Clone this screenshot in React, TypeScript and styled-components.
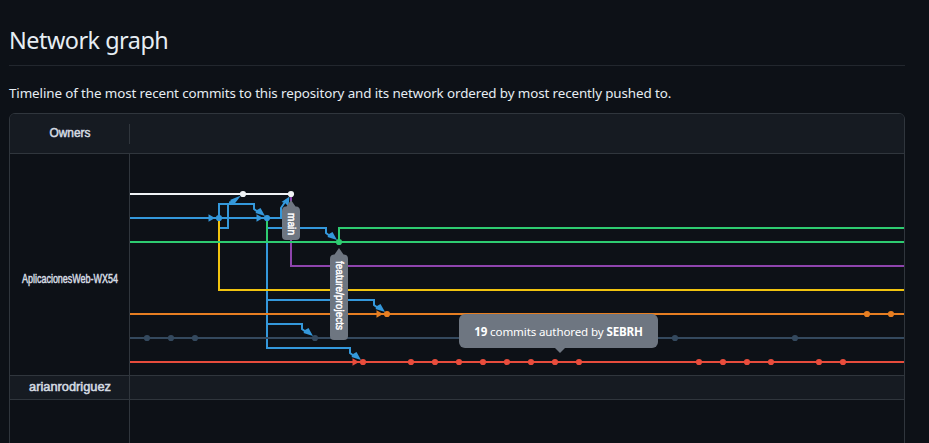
import React from "react";
import styled, { createGlobalStyle } from "styled-components";

const GlobalStyle = createGlobalStyle`
  * { box-sizing: border-box; }
  html, body { margin: 0; height: 443px; overflow: hidden; background: #0d1117; }
`;

const Page = styled.main`
  width: 929px;
  height: 443px;
  overflow: hidden;
  padding: 22px 24px 0 9px;
  background: #0d1117;
  color: #e6edf3;
  font-family: "Noto Sans", "Open Sans", sans-serif;
`;

const Title = styled.h1`
  margin: 0;
  height: 44px;
  border-bottom: 1px solid #22272e;
  font-size: 23.4px;
  font-weight: 400;
  line-height: 37px;
  letter-spacing: -0.5px;
`;

const Intro = styled.p`
  margin: 17px 0 9px;
  height: 21px;
  font-size: 13.4px;
  line-height: 20px;
  letter-spacing: -0.11px;
  white-space: nowrap;
`;

const Panel = styled.section`
  height: 360px;
  border: 1px solid #30363d;
  border-radius: 6px 6px 0 0;
  overflow: hidden;
`;

const Row = styled.div<{ $height: number; $shaded?: boolean; $last?: boolean }>`
  display: grid;
  grid-template-columns: 120px 1fr;
  height: ${(p) => p.$height}px;
  background: ${(p) => (p.$shaded ? "#161b22" : "#0d1117")};
  border-bottom: ${(p) => (p.$last ? "none" : "1px solid #30363d")};
`;

const Owner = styled.div<{ $inset?: number; $drop?: number }>`
  display: flex;
  align-items: center;
  margin: ${(p) => p.$inset ?? 0}px 0;
  padding-top: ${(p) => p.$drop ?? 0}px;
  border-right: 1px solid #30363d;
`;

const OwnerLabel = styled.svg`
  display: block;
  width: 119px;
  height: 20px;
  overflow: visible;
  fill: #d5dbe2;
  stroke: #d5dbe2;
  stroke-width: 0.5px;
  font: 400 12px "Liberation Sans", Arial, sans-serif;
`;

const GraphArea = styled.div`
  position: relative;
`;

const Graph = styled.svg`
  display: block;
  width: 774px;
  height: 221px;
`;

const Tooltip = styled.div`
  position: absolute;
  left: 329px;
  top: 160px;
  width: 199px;
  height: 34px;
  border-radius: 6px;
  background: #6e7681;
  color: #fff;
  font-size: 11.6px;
  line-height: 35px;
  letter-spacing: -0.14px;
  text-align: center;
  white-space: nowrap;

  &::after {
    content: "";
    position: absolute;
    left: 96px;
    top: 34px;
    border: 5px solid transparent;
    border-top-color: #6e7681;
    border-bottom: 0;
  }
`;

const BLUE = "#3498db";
const GREEN = "#2ecc71";
const ORANGE = "#e67e22";
const SLATE = "#34495e";
const RED = "#e74c3c";

const lines: [string, string][] = [
  ["M130 194H291", "#f0f3f6"],
  ["M130 218H281V208L285 202", BLUE],
  ["M219 218V204H254V209L258 212", BLUE],
  ["M219 228H228V204H230", BLUE],
  ["M267 228H326V233L330 236", BLUE],
  ["M267 218V348H350V353L354 356", BLUE],
  ["M267 300H374V305L378 308", BLUE],
  ["M267 324H302V329L306 332", BLUE],
  ["M291 194V266H904", "#8e44ad"],
  ["M219 218V290H904", "#f1c40f"],
  ["M130 242H904", GREEN],
  ["M267 218V242", GREEN],
  ["M339 242V228H904", GREEN],
  ["M130 314H904", ORANGE],
  ["M130 338H904", SLATE],
  ["M130 362H904", RED],
];

const commits: { y: number; color: string; xs: number[] }[] = [
  { y: 194, color: "#f0f3f6", xs: [243, 291] },
  { y: 218, color: BLUE, xs: [219, 267] },
  { y: 242, color: GREEN, xs: [339] },
  { y: 314, color: ORANGE, xs: [387, 867, 891] },
  { y: 338, color: SLATE, xs: [147, 171, 195, 315, 675, 795] },
  { y: 362, color: RED, xs: [363, 411, 435, 459, 483, 507, 531, 555, 579, 699, 723, 747, 771, 819, 843] },
];

const heads: [number, number, string][] = [
  [219, 218, BLUE],
  [267, 218, BLUE],
  [387, 314, ORANGE],
  [363, 362, RED],
];

const merges: [number, number][] = [[267, 218], [339, 242], [387, 314], [315, 338], [363, 362]];

function OwnerName({ name, width, y = 14 }: { name: string; width: number; y?: number }) {
  return (
    <OwnerLabel>
      <text x={60} y={y} textAnchor="middle" textLength={width} lengthAdjust="spacingAndGlyphs">
        {name}
      </text>
    </OwnerLabel>
  );
}

function BranchTag({ x, y, height, name, length }: { x: number; y: number; height: number; name: string; length: number }) {
  return (
    <g transform={`translate(${x} ${y})`}>
      <path
        d={`M0 0L4.5 6.5H5Q9 6.5 9 11V${height - 4}Q9 ${height} 5 ${height}H-5Q-9 ${height} -9 ${height - 4}V11Q-9 6.5 -5 6.5H-4.5Z`}
        fill="#6e7681"
      />
      <text
        transform="translate(-3 13) rotate(90)"
        fill="#fff"
        stroke="#fff"
        strokeWidth="0.45"
        fontFamily="Liberation Sans, Arial, sans-serif"
        fontSize="10"
        textLength={length}
      >
        {name}
      </text>
    </g>
  );
}

function CommitGraph() {
  return (
    <Graph viewBox="130 154 774 221">
      {lines.map(([d, color]) => (
        <path key={d} d={d} fill="none" stroke={color} strokeWidth={2} />
      ))}
      {heads.map(([x, y, color]) => (
        <path key={`${x}-${y}`} d={`M${x - 4} ${y}l-6.5 -3.8v7.6Z`} fill={color} />
      ))}
      {merges.map(([x, y]) => (
        <path key={`${x}-${y}`} d={`M${x - 2} ${y - 2}L${x - 11.5} ${y - 5}L${x - 10} ${y - 8}L${x - 6.5} ${y - 10}Z`} fill={BLUE} />
      ))}
      <path d="M241 195.5L234 204.5L232.5 203L229 204.5V201.5L231 201L230 200Z" fill={BLUE} />
      <path d="M289.5 196.5L288.5 206.5L285 203L281.5 202Z" fill={BLUE} />
      {commits.map(({ y, color, xs }) =>
        xs.map((x) => <circle key={`${x}-${y}`} cx={x} cy={y} r={3.1} fill={color} />)
      )}
      <BranchTag x={291} y={200} height={40} name="main" length={22} />
      <BranchTag x={339} y={248} height={92} name="feature/projects" length={69} />
    </Graph>
  );
}

export default function App() {
  return (
    <>
      <GlobalStyle />
      <Page>
        <Title>Network graph</Title>
        <Intro>Timeline of the most recent commits to this repository and its network ordered by most recently pushed to.</Intro>
        <Panel>
          <Row $height={40} $shaded>
            <Owner $inset={10}>
              <OwnerName name="Owners" width={41} y={13} />
            </Owner>
          </Row>
          <Row $height={222}>
            <Owner $drop={28}>
              <OwnerName name="AplicacionesWeb-WX54" width={96} />
            </Owner>
            <GraphArea>
              <CommitGraph />
              <Tooltip>
                <b>19</b> commits authored by <b>SEBRH</b>
              </Tooltip>
            </GraphArea>
          </Row>
          <Row $height={24} $shaded>
            <Owner>
              <OwnerName name="arianrodriguez" width={82} y={13} />
            </Owner>
          </Row>
          <Row $height={72} $last>
            <Owner />
          </Row>
        </Panel>
      </Page>
    </>
  );
}
